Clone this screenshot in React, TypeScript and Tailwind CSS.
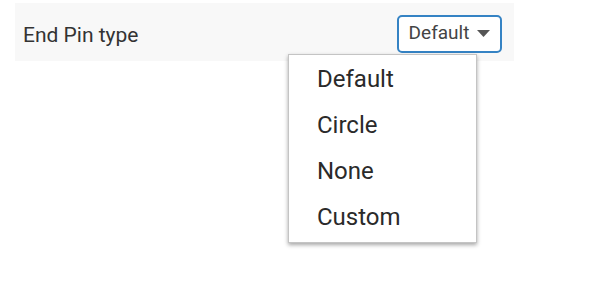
import React from 'react';

const options = ['Default', 'Circle', 'None', 'Custom'];

export default function App() {
  return (
    <div className="relative w-[603px] h-[297px] bg-white text-[#333] font-['Roboto','Liberation_Sans',sans-serif]">
      {/* setting row */}
      <div className="ml-[15px] pt-[3px]">
        <div className="w-[499px] h-[58px] bg-[#f8f8f8] flex items-center justify-between pl-[8px] pr-[12px]">
          <span className="text-[21px] leading-none mt-[7px]">End Pin type</span>
          <button className="w-[105px] h-[38px] mt-[3px] border-2 border-[#3583c4] rounded-[5px] bg-white flex items-center justify-center gap-[8px] text-[19px] text-[#444]">
            <span>Default</span>
            <svg width="13" height="7" viewBox="0 0 13 7">
              <path d="M0 0h13L6.5 7z" fill="#555" />
            </svg>
          </button>
        </div>
      </div>

      {/* open menu */}
      <ul className="absolute left-[288px] top-[54px] w-[189px] h-[189px] bg-white border border-[#c4c4c4] shadow-[0_2px_4px_rgba(0,0,0,0.35)] py-[1px]">
        {options.map((o) => (
          <li key={o} className="h-[46px] flex items-center pl-[28px] text-[24px] text-[#2a2a2a]">
            {o}
          </li>
        ))}
      </ul>
    </div>
  );
}
